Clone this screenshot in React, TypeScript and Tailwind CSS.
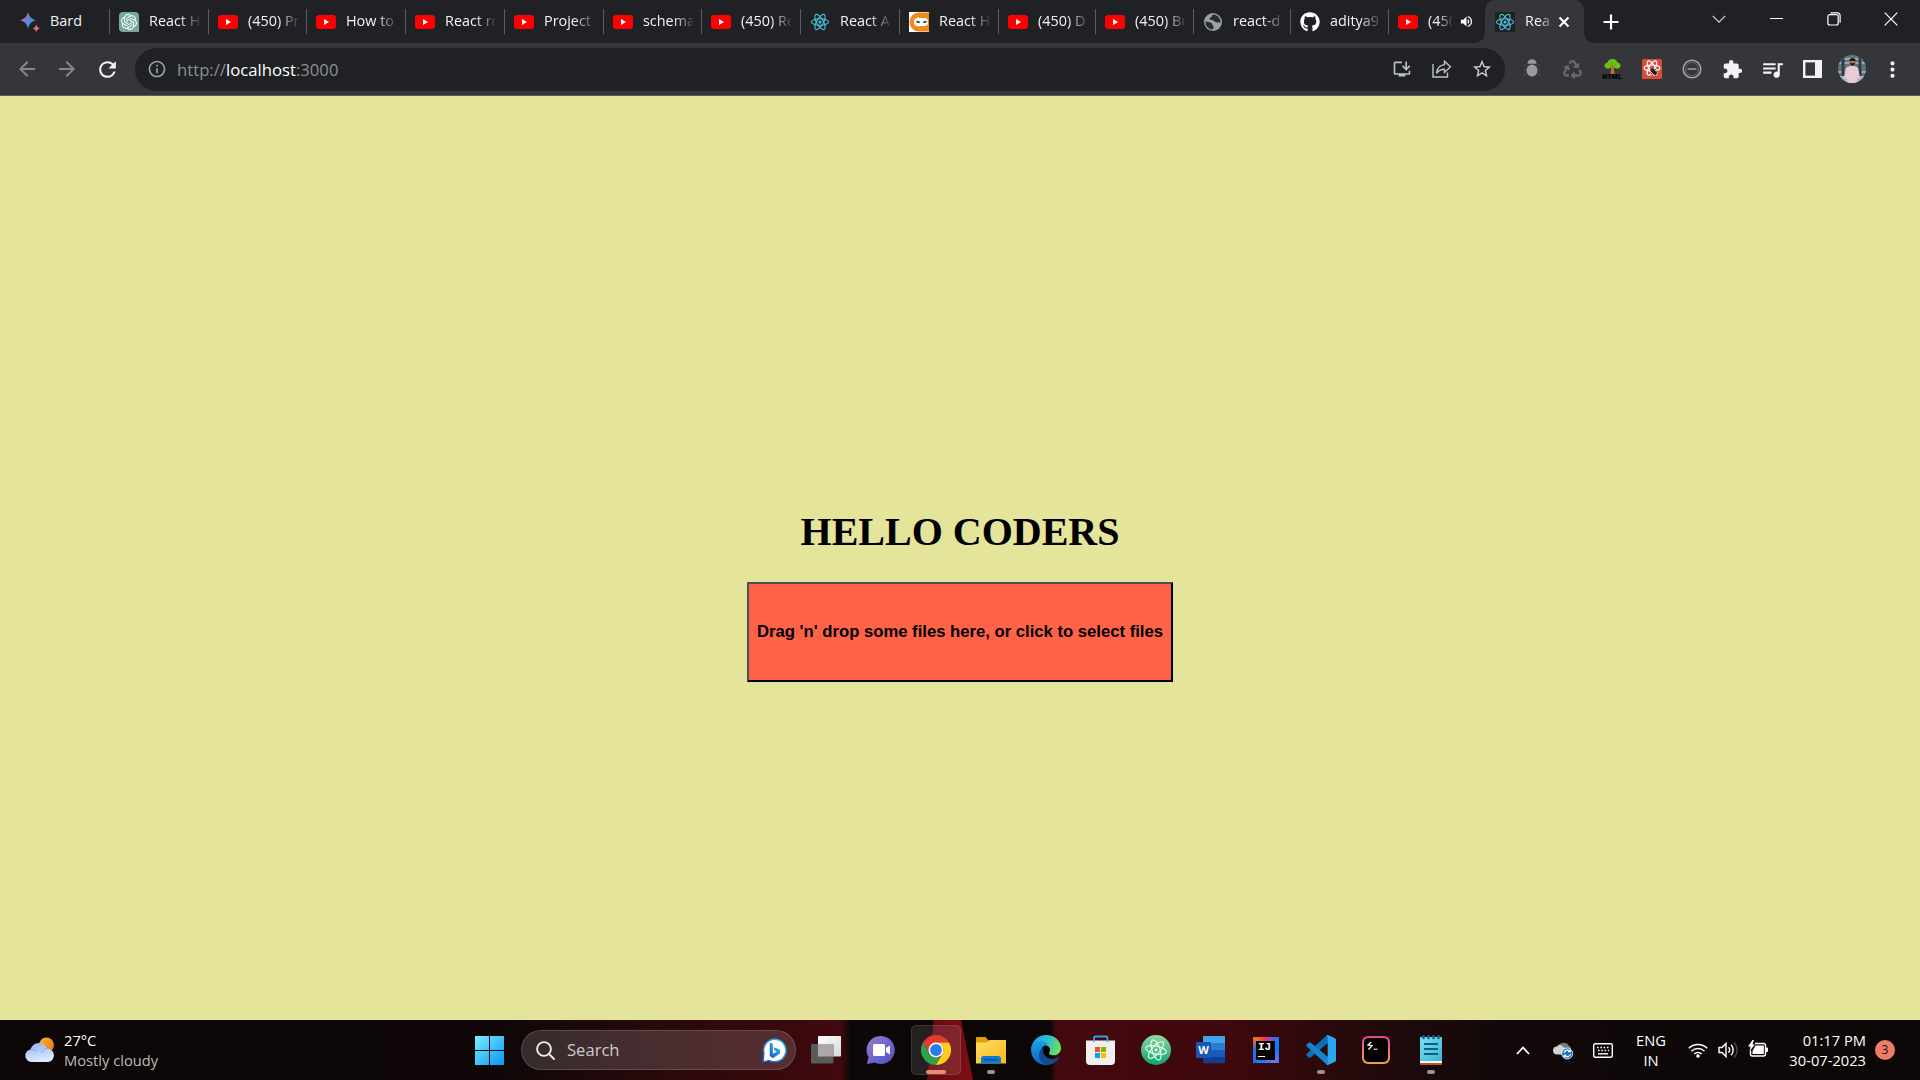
import type { ReactNode } from "react";
import { FaGithub, FaRecycle } from "react-icons/fa";
import {
  MdArrowBack,
  MdArrowForward,
  MdExtension,
  MdInfoOutline,
  MdMoreVert,
  MdOutlineInstallDesktop,
  MdQueueMusic,
  MdRefresh,
  MdStarBorder,
  MdVolumeUp,
} from "react-icons/md";
import { SiOpenai } from "react-icons/si";

/* ---------- Tab favicons ---------- */

function YouTube() {
  return (
    <svg width="20" height="20" viewBox="0 0 20 20">
      <rect x="0" y="3" width="20" height="14" rx="3.2" fill="#ff0000" />
      <path d="M8 7l5 3-5 3z" fill="#fff" />
    </svg>
  );
}

function Bard() {
  return (
    <svg width="20" height="20" viewBox="0 0 20 20">
      <defs>
        <linearGradient id="bard" x1="0" x2="1" y1="0.2" y2="0.6">
          <stop offset="0" stopColor="#e8707a" />
          <stop offset="0.45" stopColor="#7d78d8" />
          <stop offset="0.75" stopColor="#2f9be0" />
          <stop offset="1" stopColor="#6f80cf" />
        </linearGradient>
      </defs>
      <path d="M8 0C9.500 5 11 6.800 16 8.300 11 9.900 9.500 11.500 8 16.500 6.500 11.500 5 9.900 0 8.300 5 6.800 6.500 5 8 0z" fill="url(#bard)" />
      <path d="M16.300 12.500c.8 2.300 1.400 3.100 3.700 3.900-2.300.7-2.900 1.400-3.700 3.600-.8-2.200-1.500-2.900-3.700-3.600 2.200-.8 2.900-1.600 3.700-3.900z" fill="#d8707f" />
    </svg>
  );
}

function ReactMark({ color = "#4cc3dc", size = 20, width = 1.1 }: { color?: string; size?: number; width?: number }) {
  return (
    <svg width={size} height={size} viewBox="0 0 20 20" fill="none" stroke={color} strokeWidth={width}>
      <ellipse cx="10" cy="10" rx="8.600" ry="3.300" />
      <ellipse cx="10" cy="10" rx="8.600" ry="3.300" transform="rotate(60 10 10)" />
      <ellipse cx="10" cy="10" rx="8.600" ry="3.300" transform="rotate(120 10 10)" />
      <circle cx="10" cy="10" r="1.500" fill={color} stroke="none" />
    </svg>
  );
}

function CodingNinjas() {
  return (
    <svg width="20" height="20" viewBox="0 0 20 20">
      <rect width="20" height="20" fill="#fff" />
      <path d="M20 .5H10a9.500 9.500 0 000 19h10V15h-9a5 5 0 010-10h9z" fill="#ee8a1d" />
      <path d="M10 5h10v10H10z" fill="#ee8a1d" />
      <rect x="5" y="6" width="14" height="8" rx="3.500" fill="#fff" />
      <path d="M7.500 9.500l3.200 1M17.500 9.500l-3.200 1" stroke="#222" strokeWidth="1.600" />
    </svg>
  );
}

function ChatGpt() {
  return (
    <span className="flex size-5 items-center justify-center rounded-t-[4px] rounded-bl-[4px] bg-[#75a99c] text-white">
      <SiOpenai size={16} />
    </span>
  );
}

function Globe() {
  return (
    <svg width="20" height="20" viewBox="0 0 20 20">
      <circle cx="10" cy="10" r="9" fill="#9aa0a6" />
      <path
        d="M11 2.500c-2 .5-2.500 1.500-2 2.500-2 0-2.500 1.200-2.300 2.500 1.500 1 4.300.2 5.300 2.500 1.300.8 3.700.2 5.500.5a7.600 7.600 0 00-6.500-8zM2.500 9.500c2 .3 4.500.5 6 1.500 1.300 1 .5 2.500 2 3 .3 1-.2 2.300-.5 3.500a7.500 7.500 0 01-7.500-8z"
        fill="#2a2b2e"
      />
    </svg>
  );
}

type TabInfo = { icon: ReactNode; title: string; width: string; audio?: boolean };

const tabs: TabInfo[] = [
  { icon: <ChatGpt />, title: "React H", width: "w-[99px]" },
  { icon: <YouTube />, title: "(450) Pr", width: "w-[98px]" },
  { icon: <YouTube />, title: "How to", width: "w-[99px]" },
  { icon: <YouTube />, title: "React ro", width: "w-[99px]" },
  { icon: <YouTube />, title: "Project", width: "w-[99px]" },
  { icon: <YouTube />, title: "schema", width: "w-[98px]" },
  { icon: <YouTube />, title: "(450) Re", width: "w-[99px]" },
  { icon: <ReactMark />, title: "React A", width: "w-[99px]" },
  { icon: <CodingNinjas />, title: "React H", width: "w-[99px]" },
  { icon: <YouTube />, title: "(450) D", width: "w-[97px]" },
  { icon: <YouTube />, title: "(450) Bu", width: "w-[98px]" },
  { icon: <Globe />, title: "react-d", width: "w-[97px]" },
  { icon: <FaGithub size={20} color="#fff" />, title: "aditya9", width: "w-[98px]" },
  { icon: <YouTube />, title: "(450", width: "w-[97px]", audio: true },
];

function Tab({ icon, title, width, audio }: TabInfo) {
  return (
    <div className={`flex h-[25px] shrink-0 items-center border-l border-[#5a5b5e] pl-[9px] ${width}`}>
      <span className="flex w-5 shrink-0 justify-center">{icon}</span>
      <span
        className={`-mt-px ml-[10px] overflow-hidden whitespace-nowrap leading-[22px] ${
          audio
            ? "w-[24px] [mask-image:linear-gradient(to_right,#000_45%,transparent_105%)]"
            : "w-[50px] [mask-image:linear-gradient(to_right,#000_60%,transparent_105%)]"
        }`}
      >
        {title}
      </span>
      {audio && <MdVolumeUp size={15} className="ml-[7px] shrink-0 text-white" />}
    </div>
  );
}

function TabStrip() {
  return (
    <div className="flex h-[43px] bg-[#202124] text-[14.4px] text-[#f1f3f4]">
      <div className="flex flex-1 items-center">
        <div className="flex h-[25px] w-[109px] shrink-0 items-center pl-5">
          <Bard />
          <span className="-mt-px ml-[10px] leading-[22px]">Bard</span>
        </div>
        {tabs.map((t, i) => (
          <Tab key={i} {...t} />
        ))}
        <div className="relative flex h-[43px] w-[99px] shrink-0 items-center rounded-t-[10px] bg-[#35363a] pl-[10px]">
          <span className="absolute bottom-0 -left-[10px] size-[10px] bg-[radial-gradient(circle_at_0_0,#202124_9.500px,#35363a_10px)]" />
          <span className="absolute -right-[10px] bottom-0 size-[10px] bg-[radial-gradient(circle_at_100%_0,#202124_9.500px,#35363a_10px)]" />
          <span className="flex size-5 shrink-0 items-center justify-center bg-[#1f2023]">
            <ReactMark />
          </span>
          <span className="-mt-px ml-[10px] w-[25px] overflow-hidden leading-[22px] [mask-image:linear-gradient(to_right,#000_55%,transparent_120%)]">
            Rea
          </span>
          <svg className="ml-[8px] shrink-0" width="12" height="12" viewBox="0 0 12 12" stroke="#fff" strokeWidth="2">
            <path d="M1.500 1.500l9 9M10.500 1.500l-9 9" />
          </svg>
        </div>
        <svg className="ml-[19px]" width="16" height="16" viewBox="0 0 16 16" stroke="#fff" strokeWidth="2.200">
          <path d="M8 .5v15M.5 8h15" />
        </svg>
      </div>
      <div className="flex h-[37px] items-center">
        <span className="flex w-[57px] justify-center">
          <svg width="14" height="8" viewBox="0 0 14 8" fill="none" stroke="#dcdcdc" strokeWidth="1.100">
            <path d="M.7.8L7 7.200 13.300.8" />
          </svg>
        </span>
        <span className="flex w-[58px] justify-center">
          <span className="h-px w-[13px] bg-white" />
        </span>
        <span className="flex w-[57px] justify-center">
          <svg width="14" height="14" viewBox="0 0 14 14" fill="none" stroke="#fff" strokeWidth="1.200">
            <rect x=".9" y="2.700" width="10.300" height="10.300" rx="2" />
            <path d="M3.500.9h6.700a2.900 2.900 0 012.900 2.900v7" />
          </svg>
        </span>
        <span className="flex w-[58px] justify-center">
          <svg width="14" height="14" viewBox="0 0 14 14" stroke="#fff" strokeWidth="1.200">
            <path d="M.7.700l12.600 12.600M13.300.700L.7 13.300" />
          </svg>
        </span>
      </div>
    </div>
  );
}

/* ---------- Toolbar ---------- */

function ShareIcon() {
  return (
    <svg width="20" height="18" viewBox="0 0 20 18" fill="none" stroke="#bdc1c6" strokeWidth="1.400">
      <path d="M1 4v13h14.500v-4.500" />
      <path d="M12.500 1.200l6 5.600-6 5.600V9.200c-4 0-6.300 1.300-8 4.300.4-5 3.200-8.300 8-8.900z" />
    </svg>
  );
}

function Bug() {
  return (
    <svg width="16" height="20" viewBox="0 0 16 20" fill="#9b9b9b">
      <path d="M3.500 4.800a4.500 4.500 0 019 0z" />
      <ellipse cx="8" cy="11.500" rx="5.500" ry="6" />
      <path d="M2.500 7L0 5.500M1.500 11H0M2.500 14.500L0 16M13.500 7L16 5.500M14.500 11H16M13.500 14.500L16 16" stroke="#58595c" />
    </svg>
  );
}

function HtmlTree() {
  return (
    <span className="flex w-5 flex-col items-center">
      <svg width="17" height="15" viewBox="0 0 17 15">
        <path d="M7.500 5h2l1 10H6.500z" fill="#b9742b" />
        <path d="M8.500 0c3 0 4.500 1.800 5 3.500 2 .3 3 1.600 3 3.200 0 2-1.800 3-4 3l-4-2-4 2c-2.200 0-4-1-4-3C.5 5 2 3.800 3.500 3.500 4 1.500 5.500 0 8.500 0z" fill="#62c417" />
        <path d="M8.500 9V4M8.500 8l3-2M8.500 8l-3-2" stroke="#b9742b" />
      </svg>
      <span className="text-[6.700px] leading-[6px] font-black text-black">HTML</span>
    </span>
  );
}

function ReactDev() {
  return (
    <svg width="20" height="20" viewBox="0 0 20 20">
      <rect width="20" height="20" rx="1.500" fill="#dd4a38" />
      <g fill="none" stroke="#fff" strokeWidth="1.200">
        <ellipse cx="10" cy="9" rx="8" ry="3" />
        <ellipse cx="10" cy="9" rx="8" ry="3" transform="rotate(60 10 9)" />
        <ellipse cx="10" cy="9" rx="8" ry="3" transform="rotate(120 10 9)" />
      </g>
      <ellipse cx="11.600" cy="12.700" rx="2" ry="3.600" fill="#222" transform="rotate(-35 11.600 12.700)" />
      <path d="M8 11.500l7 3M9 15l5-5M13.500 16.500l1.500-5" stroke="#222" strokeWidth=".9" />
    </svg>
  );
}

function Avatar() {
  return (
    <svg width="28" height="28" viewBox="0 0 28 28">
      <defs>
        <clipPath id="avatar">
          <circle cx="14" cy="14" r="14" />
        </clipPath>
      </defs>
      <g clipPath="url(#avatar)">
        <rect width="28" height="28" fill="#66727d" />
        <path d="M0 4h28M0 8h28M0 17h28" stroke="#a9b9c6" strokeWidth="1.600" />
        <path d="M5 0v28M22 0v28" stroke="#323c46" strokeWidth="3" />
        <path d="M0 21h28v7H0z" fill="#aab4be" />
        <path d="M7.500 15c0-3 3-4 6.500-4s6.500 1 6.500 4l1.500 8-3 1v4H9v-4l-3-1z" fill="#e9cbd6" />
        <circle cx="14.500" cy="7" r="3.300" fill="#a9785f" />
        <path d="M11.200 6c0-4 6.600-4 6.600 0M11.700 7.500c.5 4 5.100 4 5.600 0l-2.800 1z" fill="#1c1a1c" />
      </g>
    </svg>
  );
}

function Cell({ children, className = "w-10" }: { children: ReactNode; className?: string }) {
  return <span className={`flex shrink-0 items-center justify-center ${className}`}>{children}</span>;
}

function Toolbar() {
  return (
    <div className="flex h-[53px] items-center border-b border-[#5b5b57] bg-[#35363a]">
      <div className="flex w-[135px] items-center pl-[7px] text-[#85878a]">
        <Cell>
          <MdArrowBack size={24} />
        </Cell>
        <Cell>
          <MdArrowForward size={24} />
        </Cell>
        <Cell>
          <MdRefresh size={25} color="#f1f3f4" />
        </Cell>
      </div>
      <div className="flex h-[43px] w-[1370px] items-center rounded-full bg-[#202124] pr-[3px] pl-[12px]">
        <MdInfoOutline size={20} color="#9aa0a6" />
        <div className="mt-px ml-[10px] flex-1 text-[16.700px] leading-6 text-[#8b8f94]">
          http://<span className="text-white">localhost</span>:3000
        </div>
        <Cell>
          <MdOutlineInstallDesktop size={20} color="#bdc1c6" />
        </Cell>
        <Cell>
          <ShareIcon />
        </Cell>
        <Cell>
          <MdStarBorder size={22} color="#c8cbd0" />
        </Cell>
      </div>
      <div className="flex items-center pl-[7px]">
        <Cell>
          <Bug />
        </Cell>
        <Cell>
          <FaRecycle size={19} color="#67686b" />
        </Cell>
        <Cell>
          <HtmlTree />
        </Cell>
        <Cell>
          <ReactDev />
        </Cell>
        <Cell>
          <svg width="20" height="20" viewBox="0 0 20 20" fill="none">
            <circle cx="10" cy="10" r="8.800" stroke="#a4a5a6" strokeWidth="1.600" />
            <circle cx="10" cy="10" r="6.600" stroke="#5c5d60" strokeWidth="1.200" />
            <path d="M5.500 10h9" stroke="#a4a5a6" strokeWidth="1.400" />
          </svg>
        </Cell>
        <Cell>
          <MdExtension size={21} color="#f1f3f4" />
        </Cell>
        <Cell>
          <MdQueueMusic size={25} color="#f1f3f4" />
        </Cell>
        <Cell>
          <svg width="19" height="18" viewBox="0 0 19 18">
            <rect x="1.200" y="1.200" width="16.600" height="15.600" fill="none" stroke="#f1f3f4" strokeWidth="2.400" />
            <path d="M12 1h6v16h-6z" fill="#f1f3f4" />
          </svg>
        </Cell>
        <Cell>
          <Avatar />
        </Cell>
        <Cell>
          <MdMoreVert size={25} color="#f1f3f4" />
        </Cell>
      </div>
    </div>
  );
}

/* ---------- Taskbar ---------- */

function Weather() {
  return (
    <svg width="30" height="26" viewBox="0 0 30 26">
      <defs>
        <linearGradient id="sun" x1="0" x2="1" y1="0" y2="1">
          <stop offset="0" stopColor="#fbb92e" />
          <stop offset="1" stopColor="#ee6a12" />
        </linearGradient>
        <linearGradient id="cloud" x1="0" x2="0.3" y1="0" y2="1">
          <stop offset="0" stopColor="#8db2f0" />
          <stop offset="1" stopColor="#dceafd" />
        </linearGradient>
      </defs>
      <circle cx="21.500" cy="8" r="7.500" fill="url(#sun)" />
      <path d="M6.500 25A6.300 6.300 0 015.500 12.500C7 8 10.500 6 14 6c4 0 7 2.200 8 5.500A6.800 6.800 0 0123.300 25z" fill="url(#cloud)" />
      <path d="M5.500 12.700c2.500-.5 5 .3 6.500 2M16.500 16c.5-3 3-4.700 6-4.500" stroke="#7f9fe0" strokeWidth=".8" fill="none" />
    </svg>
  );
}

function WindowsLogo() {
  return (
    <svg width="29" height="29" viewBox="0 0 29 29">
      <defs>
        <linearGradient id="win" gradientUnits="userSpaceOnUse" x1="0" x2="29" y1="0" y2="29">
          <stop offset="0" stopColor="#79f0ff" />
          <stop offset="1" stopColor="#0a94f6" />
        </linearGradient>
      </defs>
      <path d="M0 0h14v14H0zM15 0h14v14H15zM0 15h14v14H0zM15 15h14v14H15z" fill="url(#win)" />
    </svg>
  );
}

function Bing() {
  return (
    <svg width="25" height="25" viewBox="0 0 25 25">
      <defs>
        <linearGradient id="bing" x1="1" x2="0" y1="0" y2="1">
          <stop offset="0" stopColor="#35c8f0" />
          <stop offset="1" stopColor="#1457d0" />
        </linearGradient>
      </defs>
      <path d="M12.500 1.200a11.300 11.300 0 11-5 21.400L1 24l.8-9A11.300 11.300 0 0112.500 1.200z" fill="#fff" stroke="url(#bing)" strokeWidth="1.500" />
      <path d="M7.800 4.500l3 1.200v10l3.900-2.200-2-1-1.200-3.200 6.500 2.300v3.800L10.800 20.300l-3-2.300z" fill="url(#bing)" />
    </svg>
  );
}

function TaskView() {
  return (
    <svg width="30" height="28" viewBox="0 0 30 28">
      <defs>
        <linearGradient id="tv" x1="0" x2="1" y1="0" y2="1">
          <stop offset="0" stopColor="#fff" />
          <stop offset="1" stopColor="#d8d8d8" />
        </linearGradient>
      </defs>
      <rect x="7" y="0" width="23" height="20.500" rx="1" fill="url(#tv)" />
      <rect x="0" y="8" width="22.500" height="19.500" rx="1" fill="#5b5b5b" />
      <rect x="7" y="8" width="15.500" height="12.500" fill="#aaa8a8" />
    </svg>
  );
}

function Chat() {
  return (
    <svg width="30" height="30" viewBox="0 0 30 30">
      <defs>
        <linearGradient id="chat" x1="0" x2="1" y1="0" y2="1">
          <stop offset="0" stopColor="#9a7cc0" />
          <stop offset="0.5" stopColor="#6f68cf" />
          <stop offset="1" stopColor="#4a54b8" />
        </linearGradient>
      </defs>
      <path d="M15 1a14 14 0 11-6.500 26.500L1 29l1.500-7A14 14 0 0115 1z" fill="url(#chat)" />
      <rect x="7" y="9" width="12" height="12" rx="1.500" fill="#fff" />
      <path d="M20 13l4-2.500v9L20 17z" fill="#fff" />
    </svg>
  );
}

function Chrome() {
  return (
    <svg width="30" height="30" viewBox="0 0 48 48">
      <path d="M24 0a24 24 0 0120.800 12H24L13.600 30 3.200 12A24 24 0 0124 0z" fill="#e33b2e" />
      <path d="M3.200 12l10.400 18c2 3.600 6 6 10.400 6h7L24 48A24 24 0 013.200 12z" fill="#2da14c" />
      <path d="M24 48a24 24 0 0020.800-36H24a12 12 0 0110.400 18z" fill="#fdcc1e" />
      <circle cx="24" cy="24" r="12" fill="#fff" />
      <circle cx="24" cy="24" r="9.500" fill="#2a7de9" />
    </svg>
  );
}

function Explorer() {
  return (
    <svg width="30" height="28" viewBox="0 0 30 28">
      <defs>
        <linearGradient id="folder" x1="0" x2="1" y1="0" y2="1">
          <stop offset="0" stopColor="#ffdc63" />
          <stop offset="1" stopColor="#f8bb1c" />
        </linearGradient>
      </defs>
      <path d="M0 2q0-1 1-1h8.500l3 3.500H30V9H0z" fill="#e19f06" />
      <path d="M0 6.500h10.500L14 4h16v23.500H0z" fill="url(#folder)" />
      <path d="M5 27.500V23q0-3 3-3h14q3 0 3 3v4.500z" fill="#0f7bd2" />
      <path d="M8.500 23.700h13" stroke="#0a4b94" strokeWidth="1.500" />
    </svg>
  );
}

function Edge() {
  return (
    <svg width="30" height="30" viewBox="0 0 30 30">
      <defs>
        <linearGradient id="edgeTop" x1="0" x2="1" y1="0.300" y2="0.600">
          <stop offset="0" stopColor="#1c9ee6" />
          <stop offset="0.550" stopColor="#2fc4c6" />
          <stop offset="1" stopColor="#6fe34f" />
        </linearGradient>
        <linearGradient id="edgeLeft" x1="0" x2="0" y1="0" y2="1">
          <stop offset="0" stopColor="#1b9de2" />
          <stop offset="1" stopColor="#0c63bc" />
        </linearGradient>
      </defs>
      <path d="M0 14.500C.6 6 7 0 15 0c9 0 15 6.300 15 13 0 4.600-3.400 7.300-7.500 7.300-3.300 0-5-1.300-4.300-2.500 2.600-3.800-.6-7.800-5.200-7.800C7 10 1.500 11 0 14.500z" fill="url(#edgeTop)" />
      <path d="M0 15c0-5.500 5-8.700 9.800-8.700 4 0 6.200 1.200 7.200 3.500-5 .2-8.500 5-7.500 9.800C10.500 25 14.500 29 19 29.500A15 15 0 010 15z" fill="url(#edgeLeft)" />
      <path d="M12.500 12.500c-2 6 2.500 11.500 9 11.500 2.400 0 4.400-.7 5.700-1.500.7-.3 1 .2.700.7A15 15 0 0117 30c-5-.5-9-4.500-9-9.500 0-3.500 1.800-6.600 4.500-8z" fill="#114a8f" />
    </svg>
  );
}

function Store() {
  return (
    <svg width="29" height="30" viewBox="0 0 29 30">
      <path d="M8 8V3q0-1.500 1.500-1.500h10.500Q21.500 1.500 21.500 3v5" fill="none" stroke="#22a8e6" strokeWidth="1.800" />
      <path d="M0 5.500h29V26q0 4-4 4H4q-4 0-4-4z" fill="#efefef" />
      <path d="M8 5.500V7M21.500 5.500V7" stroke="#22a8e6" strokeWidth="1.800" />
      <path d="M9 12h5v5H9z" fill="#f25022" />
      <path d="M15 12h5v5h-5z" fill="#7fba00" />
      <path d="M9 18h5v5H9z" fill="#00a4ef" />
      <path d="M15 18h5v5h-5z" fill="#ffb900" />
    </svg>
  );
}

function Atom() {
  return (
    <svg width="30" height="30" viewBox="0 0 30 30">
      <defs>
        <linearGradient id="atom" x1="0.500" x2="0.500" y1="0" y2="1">
          <stop offset="0" stopColor="#8fd8a0" />
          <stop offset="1" stopColor="#0da271" />
        </linearGradient>
      </defs>
      <circle cx="15" cy="15" r="15" fill="url(#atom)" />
      <g fill="none" stroke="#e8fff3" strokeWidth="1.100">
        <ellipse cx="15" cy="15" rx="10.500" ry="4" transform="rotate(12 15 15)" />
        <ellipse cx="15" cy="15" rx="10.500" ry="4" transform="rotate(72 15 15)" />
        <ellipse cx="15" cy="15" rx="10.500" ry="4" transform="rotate(132 15 15)" />
      </g>
      <circle cx="15" cy="15" r="1.500" fill="#fff" />
    </svg>
  );
}

function Word() {
  return (
    <span className="relative block h-[28px] w-[29px]">
      <svg width="29" height="28" viewBox="0 0 29 28">
        <path d="M7 1q0-1 1-1h20q1 0 1 1v6H7z" fill="#41a5ee" />
        <path d="M7 7h22v7H7z" fill="#2b7cd3" />
        <path d="M7 14h22v7H7z" fill="#185abd" />
        <path d="M7 21h22v5.500q0 .8-1 .8H8q-1 0-1-.8z" fill="#103f91" />
        <rect x="0" y="6" width="15" height="16" rx="1.200" fill="#1b56b4" />
      </svg>
      <span className="absolute top-[6px] left-0 w-[15px] text-center text-[11px] leading-[16px] font-bold text-white">W</span>
    </span>
  );
}

function IntelliJ() {
  return (
    <span className="flex size-[26px] items-center justify-center bg-[conic-gradient(from_0deg,#e0359a,#087cfa_15%,#087cfa_25%,#7a6cf0_40%,#087cfa_60%,#1d6fe8_75%,#fe6d1d_88%,#fe2857)]">
      <span className="flex size-[19px] flex-col bg-black pt-[1px] pl-[2px] font-['Liberation_Mono',monospace] text-[11px] leading-[10px] font-bold text-white">
        IJ
        <span className="mt-[4px] h-px w-[7px] bg-white" />
      </span>
    </span>
  );
}

function VsCode() {
  return (
    <svg width="30" height="30" viewBox="0 0 30 30">
      <path d="M22 .3V8L4.500 22.500q-1 .6-1.900-.2L.7 20.600q-1-1 0-1.900L20 .9z" fill="#0d6fb8" />
      <path d="M22 29.700V22L4.500 7.500q-1-.6-1.900.2L.7 9.400q-1 1 0 1.900L20 29.100z" fill="#1583d0" />
      <path d="M22 0l7 3.200q1 .5 1 1.600v20.400q0 1.100-1 1.600L22 30q-1 .2-2-.8.900.4 1.700-1V2q-.6-1.700-1.700-1.200 1-1 2-.8z" fill="#2ba6f2" />
    </svg>
  );
}

function Terminal() {
  return (
    <span className="flex size-[28px] rounded-[6px] bg-linear-to-b from-[#e83f93] to-[#eaa13a] p-[2px]">
      <span className="flex flex-1 rounded-[4.500px] bg-black">
        <svg width="24" height="24" viewBox="0 0 24 24" fill="none" stroke="#fff" strokeWidth="1.300">
          <path d="M7 4L4 7l4 .7L4.500 11.500" />
          <path d="M9.500 11.200h4" strokeWidth="1" />
        </svg>
      </span>
    </span>
  );
}

function Notepad() {
  return (
    <svg width="22" height="30" viewBox="0 0 22 30">
      <defs>
        <linearGradient id="note" x1="0" x2="1" y1="0" y2="1">
          <stop offset="0" stopColor="#7fdff3" />
          <stop offset="1" stopColor="#3cb4d6" />
        </linearGradient>
      </defs>
      <rect x="0" y="24" width="22" height="6" rx="1" fill="#b6591a" />
      <path d="M0 24h22v4H0z" fill="#f4f4f4" />
      <path d="M0 3q0-1 1-1h20q1 0 1 1v23H0z" fill="url(#note)" />
      <path d="M3.500 1.300v1.700M8.500 1.300v1.700M13.500 1.300v1.700M18.500 1.300v1.700" stroke="#12698c" strokeWidth="2.600" strokeLinecap="round" />
      <path d="M4 9h14M4 14h14M4 19h14" stroke="#0b5f83" strokeWidth="2" />
    </svg>
  );
}

const apps: { name: string; icon: ReactNode; state?: "active" | "open" }[] = [
  { name: "taskview", icon: <TaskView /> },
  { name: "chat", icon: <Chat /> },
  { name: "chrome", icon: <Chrome />, state: "active" },
  { name: "explorer", icon: <Explorer />, state: "open" },
  { name: "edge", icon: <Edge /> },
  { name: "store", icon: <Store /> },
  { name: "atom", icon: <Atom /> },
  { name: "word", icon: <Word /> },
  { name: "intellij", icon: <IntelliJ /> },
  { name: "vscode", icon: <VsCode />, state: "open" },
  { name: "terminal", icon: <Terminal /> },
  { name: "notepad", icon: <Notepad />, state: "open" },
];

function Tray() {
  return (
    <div className="flex h-full items-center text-[14.7px] leading-5 text-white">
      <Cell className="w-10">
        <svg width="14" height="9" viewBox="0 0 14 9" fill="none" stroke="#fff" strokeWidth="1.800">
          <path d="M1 8l6-6.500L13 8" />
        </svg>
      </Cell>
      <Cell className="w-10">
        <svg width="20" height="19" viewBox="0 0 20 19">
          <path d="M5 6a6 6 0 0111-1q2.500 1 2 4l-8 3z" fill="#7c7c7c" />
          <path d="M4 13.500a4 4 0 010-8Q6 2.500 9 5l7 5-4 3.500z" fill="#d4d4d4" />
          <circle cx="14.200" cy="12.500" r="5.500" fill="#1a6fc0" stroke="#fff" strokeWidth=".8" />
          <path d="M11 12a3.400 3.400 0 016-1.500M17.500 13a3.400 3.400 0 01-6 1.500M17.300 8.500v2.200H15M11.200 16.500v-2.200h2.200" fill="none" stroke="#fff" strokeWidth="1.200" />
        </svg>
      </Cell>
      <Cell className="w-10">
        <svg width="20" height="15" viewBox="0 0 20 15" fill="none" stroke="#fff" strokeWidth="1.400">
          <rect x=".7" y=".7" width="18.600" height="13.600" rx="1.500" />
          <path d="M4 4.500h12M5 7.500h11" strokeDasharray="1.600 1.700" strokeWidth="1.600" />
          <path d="M5 10.800h10" />
        </svg>
      </Cell>
      <Cell className="w-14 flex-col">
        <span>ENG</span>
        <span>IN</span>
      </Cell>
      <div className="flex w-[104px] items-center pl-[9px]">
        <svg className="shrink-0" width="20" height="15" viewBox="0 0 20 15" fill="none" stroke="#fff" strokeWidth="1.500">
          <path d="M.8 5.300a13 13 0 0118.400 0M3.500 8.200a9.200 9.200 0 0113 0M6.200 11a5.300 5.300 0 017.600 0" />
          <circle cx="10" cy="13" r="1.800" fill="#fff" stroke="none" />
        </svg>
        <svg className="ml-[10px] shrink-0" width="20" height="18" viewBox="0 0 20 18" fill="none" stroke="#fff" strokeWidth="1.400">
          <path d="M1 6.500h3L8 2.500v13l-4-4H1z" />
          <path d="M10.500 6.300a4 4 0 010 5.400M13 3.800a7.300 7.300 0 010 10.400" />
          <path d="M16 1.500a10.600 10.600 0 010 15" stroke="#4a4646" />
        </svg>
        <svg className="-mt-[3px] ml-[10px] shrink-0" width="21" height="17" viewBox="0 0 21 17">
          <path d="M7 3.500h8.500q2 0 2 2V14q0 2-2 2h-11q-2 0-2-2v-3.500" fill="none" stroke="#fff" strokeWidth="1.400" />
          <path d="M7.500 5.500h8.300v8.600H4.500V11z" fill="#fff" />
          <path d="M18 7.500h1q1 0 1 1v2.500q0 1-1 1h-1z" fill="#fff" />
          <path d="M4.500 0L0 6.500h2.500L1.500 11 7 4.500H4.500L6 0z" fill="#fff" />
        </svg>
      </div>
      <div className="flex w-[83px] flex-col items-end">
        <span className="whitespace-nowrap">01:17 PM</span>
        <span className="whitespace-nowrap">30-07-2023</span>
      </div>
      <span className="mr-[25px] ml-[9px] flex size-5 items-center justify-center rounded-full bg-[#f07c68] text-[12px] text-[#1c0f0d]">3</span>
    </div>
  );
}

function Taskbar() {
  return (
    <div className="relative flex h-[60px] bg-[linear-gradient(90deg,#0c0607_0,#0f0708_26%,#28090b_34%,#40090d_43.800%,#0e0708_44.300%,#0c0607_54.700%,#42090e_55%,#3f080c_64%,#230a0c_71%,#100809_79%,#0c0607_100%)]">
      <div className="absolute top-0 left-[927px] h-full w-[46px] bg-linear-to-r from-[#620c11] to-[#7f0d14] [clip-path:polygon(15%_0,74%_0,100%_100%,0_100%)]" />
      <div className="relative flex w-[475px] items-center pl-[25px] text-[14.700px] leading-5">
        <Weather />
        <div className="ml-[9px]">
          <div className="text-white">27°C</div>
          <div className="text-[#bdb9b9]">Mostly cloudy</div>
        </div>
      </div>
      <div className="relative flex items-center">
        <WindowsLogo />
        <div className="mr-[2px] ml-[17px] flex h-10 w-[275px] items-center rounded-full border border-white/15 bg-white/15 pr-[8px] pl-[14px]">
          <svg width="19" height="19" viewBox="0 0 19 19" fill="none" stroke="#ececec" strokeWidth="1.900">
            <circle cx="8" cy="8" r="6.900" />
            <path d="M13 13l5 5" strokeLinecap="round" />
          </svg>
          <span className="ml-[12px] flex-1 text-[16.600px] leading-6 text-[#d0caca]">Search</span>
          <Bing />
        </div>
        {apps.map((a) => (
          <div key={a.name} className="flex w-[55px] justify-center">
            <div
              className={`relative flex size-[50px] items-center justify-center rounded-[5px] border ${
                a.state === "active" ? "border-white/10 bg-white/10" : "border-transparent"
              }`}
            >
              {a.icon}
              {a.state === "active" && <span className="absolute bottom-0 h-1 w-5 rounded-full bg-[#f48771]" />}
              {a.state === "open" && <span className="absolute bottom-0 h-1 w-2 rounded-full bg-[#989292]" />}
            </div>
          </div>
        ))}
      </div>
      <div className="relative ml-auto">
        <Tray />
      </div>
    </div>
  );
}

export default function App() {
  return (
    <div className="flex h-[1080px] w-[1920px] flex-col overflow-hidden font-['Open_Sans','Noto_Sans',sans-serif]">
      <TabStrip />
      <Toolbar />
      <main className="flex flex-1 flex-col items-center bg-[#e4e49b] pt-[413px] text-black">
        <h1 className="font-['Liberation_Serif',serif] text-[40px] leading-[46px] font-bold">HELLO CODERS</h1>
        <button className="mt-[27px] h-[100px] w-[426px] border-2 border-t-[#505050] border-r-black border-b-black border-l-[#505050] bg-[#ff6347] pb-[2px] font-['Liberation_Sans',sans-serif] text-[16.670px] font-bold whitespace-nowrap">
          Drag 'n' drop some files here, or click to select files
        </button>
      </main>
      <Taskbar />
    </div>
  );
}
